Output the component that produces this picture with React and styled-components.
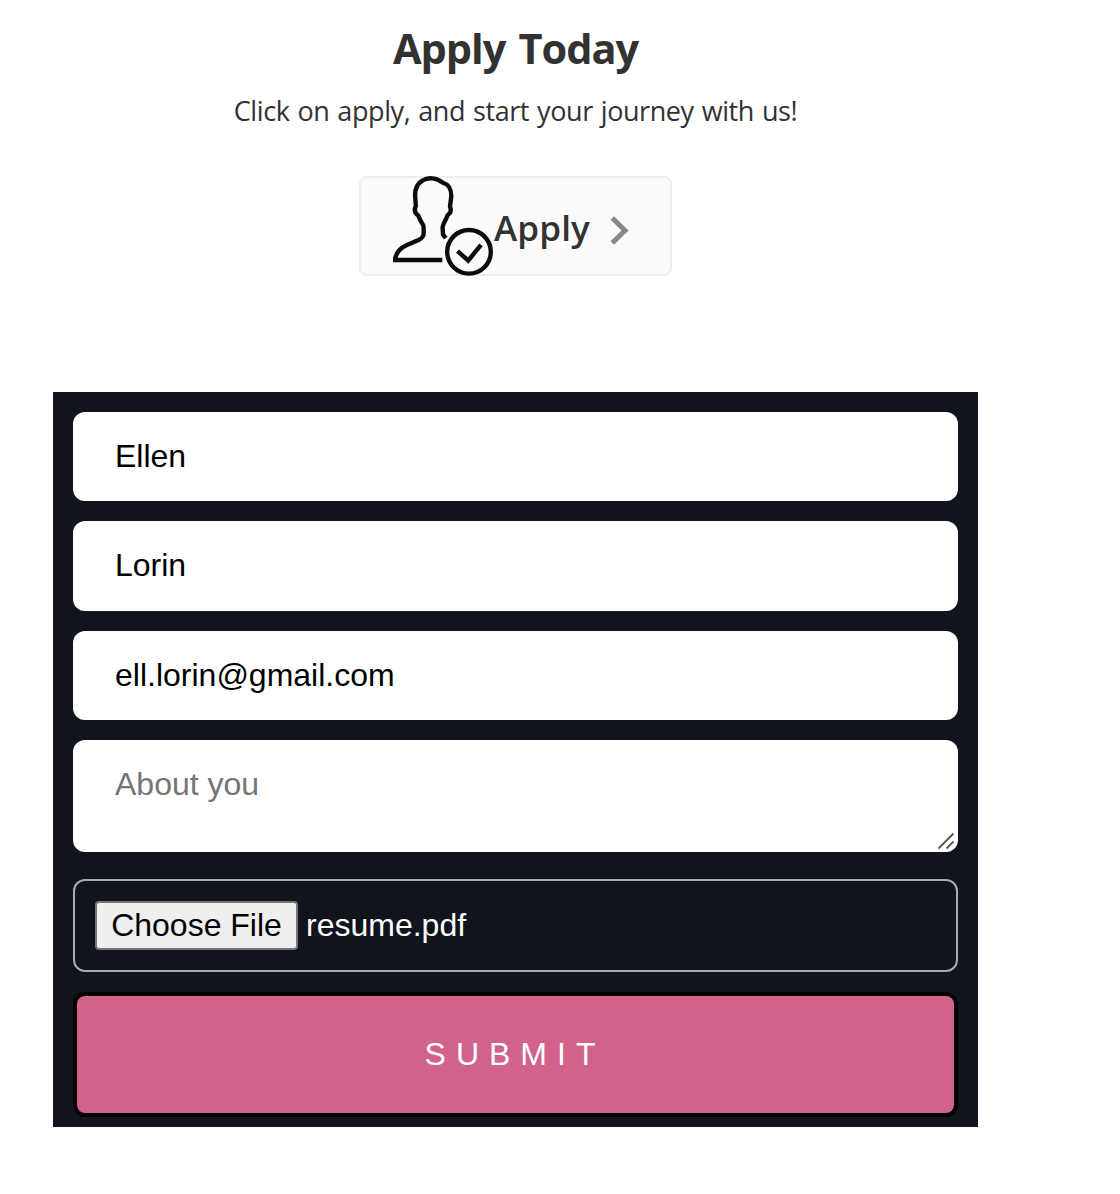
import React from "react";
import styled, { createGlobalStyle, css } from "styled-components";

const GlobalStyle = createGlobalStyle`
  *, *::before, *::after { box-sizing: border-box; }
  body { margin: 0; background: #fff; }
`;

const Page = styled.main`
  width: 925px;
  margin-left: 53px;
  padding-top: 20px;
  display: flex;
  flex-direction: column;
  align-items: center;
  color: #323232;
  font-family: "Open Sans", "Noto Sans", sans-serif;
`;

const Title = styled.h1`
  margin: 0;
  height: 60px;
  font-size: 41.5px;
  line-height: 57px;
  font-weight: 700;
  letter-spacing: -1.05px;
  word-spacing: 3.6px;
  white-space: nowrap;
`;

const Subtitle = styled.p`
  margin: 10px 0 0;
  height: 40px;
  font-size: 27px;
  line-height: 42px;
  letter-spacing: -0.42px;
  word-spacing: 1.4px;
  white-space: nowrap;
`;

const ApplyButton = styled.button`
  display: flex;
  align-items: center;
  width: 313px;
  height: 100px;
  margin: 46px 0 116px;
  padding: 0 0 0 32px;
  border: 2px solid #eee;
  border-radius: 8px;
  background: #fafafa;
  color: #323232;
  font: 600 35px/50px "Open Sans", "Noto Sans", sans-serif;
`;

const PersonIcon = styled.svg`
  flex: none;
  width: 100px;
  height: 100px;
`;

const ApplyLabel = styled.span`
  width: 116.5px;
  padding: 4px 0 0 1px;
  letter-spacing: 0.15px;
  text-align: left;
`;

const Chevron = styled.svg`
  flex: none;
  width: 20px;
  height: 30px;
  margin-top: 8px;
`;

const Form = styled.form`
  display: flex;
  flex-direction: column;
  width: 100%;
  height: 735px;
  padding: 20px 20px 10px;
  background: #11141d;
  font-family: "Liberation Sans", Arial, sans-serif;
`;

const field = css`
  display: block;
  width: 100%;
  border: 0;
  border-radius: 12px;
  background: #fff;
  color: #000;
  font: 32px/37px "Liberation Sans", Arial, sans-serif;
  outline: none;
`;

const TextField = styled.input`
  ${field}
  height: 89.4px;
  margin-bottom: 20px;
  padding: 0 42px 0.6px;
`;

const AboutBox = styled.div`
  display: grid;
  height: 112px;
  margin-bottom: 27px;
`;

const AboutField = styled.textarea`
  ${field}
  grid-area: 1 / 1;
  height: 112px;
  padding: 26px 42px;
  resize: none;
  overflow: hidden;
  &::placeholder { color: #757575; opacity: 1; }
`;

const ResizeGrip = styled.svg`
  grid-area: 1 / 1;
  align-self: end;
  justify-self: end;
  width: 18px;
  height: 18px;
  margin: 0 3px 2px 0;
  z-index: 1;
`;

const FileField = styled.div`
  display: flex;
  align-items: center;
  gap: 8px;
  height: 93px;
  margin-bottom: 20px;
  padding: 0 20px;
  border: 2px solid #a9a9b0;
  border-radius: 12px;
  color: #fff;
  font-size: 32px;
`;

const FileButton = styled.button`
  width: 203px;
  height: 49px;
  padding: 0;
  border: 2px solid #767676;
  border-radius: 4px;
  background: #efefef;
  color: #000;
  font: 32px/37px "Liberation Sans", Arial, sans-serif;
  white-space: nowrap;
`;

const SubmitButton = styled.button`
  height: 125px;
  padding: 0 1px 0 0;
  border: 4px solid #000;
  border-radius: 12px;
  background: #d0628b;
  color: #fff;
  font: 32px/37px "Liberation Sans", Arial, sans-serif;
  letter-spacing: 10px;
`;

const fields = [
  { name: "firstName", type: "text", value: "Ellen" },
  { name: "lastName", type: "text", value: "Lorin" },
  { name: "email", type: "email", value: "ell.lorin@gmail.com" },
];

export default function App() {
  return (
    <>
      <GlobalStyle />
      <Page>
        <Title>Apply Today</Title>
        <Subtitle>Click on apply, and start your journey with us!</Subtitle>
        <ApplyButton type="button">
          <PersonIcon viewBox="0 0 100 100" fill="none" stroke="#0c0c0c" strokeWidth="4.4">
            <path d="M52.8 62.2L50 58.5L49.6 51.5Q50 48.5 53 43L54.5 39.5L57.3 36.5Q58.2 33.5 57 30.5L58.2 21C58.6 13 56.5 8.8 49.5 6.5C44 1.8 35 0.8 29.5 4.5C23.5 8 22.1 13.5 22.1 19L22.8 30L21.8 33Q21.6 37 25.2 39.5L27 43.5L30.3 49.5Q30.9 52 30.6 58Q30.5 61.5 25.5 64L14 69Q3 74 2 84H49.3" />
            <circle cx="76" cy="75.8" r="21.8" />
            <path d="M64.5 75.2L75.3 84.5L88 68.8" />
          </PersonIcon>
          <ApplyLabel>Apply</ApplyLabel>
          <Chevron viewBox="0 0 20 30" fill="none" stroke="#888" strokeWidth="5">
            <path d="M2.3 3L15 15.5L2.3 28" />
          </Chevron>
        </ApplyButton>
        <Form onSubmit={(event) => event.preventDefault()}>
          {fields.map((item) => (
            <TextField key={item.name} name={item.name} type={item.type} defaultValue={item.value} />
          ))}
          <AboutBox>
            <AboutField name="about" placeholder="About you" />
            <ResizeGrip viewBox="0 0 18 18" fill="none" stroke="#555" strokeWidth="1.8">
              <path d="M1.5 16.5L16.5 1.5M9.5 16.5L16.5 9.5" />
            </ResizeGrip>
          </AboutBox>
          <FileField>
            <FileButton type="button">Choose File</FileButton>
            <span>resume.pdf</span>
          </FileField>
          <SubmitButton type="submit">SUBMIT</SubmitButton>
        </Form>
      </Page>
    </>
  );
}
